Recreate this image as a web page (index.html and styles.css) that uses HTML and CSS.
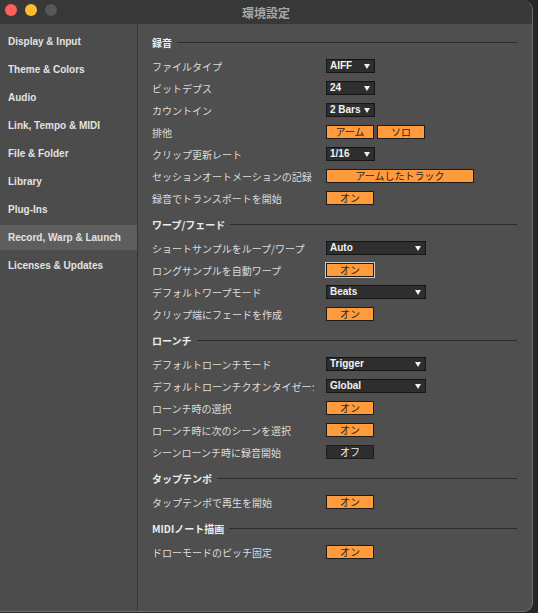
FILE: index.html
```html
<!DOCTYPE html>
<html lang="ja">
<head>
    <meta charset="UTF-8">
    <title>環境設定</title>
    <link rel="stylesheet" href="styles.css">
</head>
<body>

    <div class="window">
        <div class="titlebar">
            <div class="lights">
                <span class="light red"></span>
                <span class="light yellow"></span>
                <span class="light gray"></span>
            </div>
            <div class="title">環境設定</div>
        </div>

        <div class="main">
            <div class="sidebar">
                <div class="nav-item">Display &amp; Input</div>
                <div class="nav-item">Theme &amp; Colors</div>
                <div class="nav-item">Audio</div>
                <div class="nav-item">Link, Tempo &amp; MIDI</div>
                <div class="nav-item">File &amp; Folder</div>
                <div class="nav-item">Library</div>
                <div class="nav-item">Plug-Ins</div>
                <div class="nav-item active">Record, Warp &amp; Launch</div>
                <div class="nav-item">Licenses &amp; Updates</div>
            </div>

            <div class="content">
                <div class="section-title"><span>録音</span></div>
                <div class="row">
                    <div class="label">ファイルタイプ</div>
                    <div class="dropdown">AIFF</div>
                </div>
                <div class="row">
                    <div class="label">ビットデプス</div>
                    <div class="dropdown">24</div>
                </div>
                <div class="row">
                    <div class="label">カウントイン</div>
                    <div class="dropdown">2 Bars</div>
                </div>
                <div class="row">
                    <div class="label">排他</div>
                    <div class="toggle on">アーム</div>
                    <div class="toggle on">ソロ</div>
                </div>
                <div class="row">
                    <div class="label">クリップ更新レート</div>
                    <div class="dropdown">1/16</div>
                </div>
                <div class="row">
                    <div class="label">セッションオートメーションの記録</div>
                    <div class="toggle on xwide">アームしたトラック</div>
                </div>
                <div class="row">
                    <div class="label">録音でトランスポートを開始</div>
                    <div class="toggle on">オン</div>
                </div>

                <div class="section-title"><span>ワープ/フェード</span></div>
                <div class="row">
                    <div class="label">ショートサンプルをループ/ワープ</div>
                    <div class="dropdown wide">Auto</div>
                </div>
                <div class="row">
                    <div class="label">ロングサンプルを自動ワープ</div>
                    <div class="toggle on focus">オン</div>
                </div>
                <div class="row">
                    <div class="label">デフォルトワープモード</div>
                    <div class="dropdown wide">Beats</div>
                </div>
                <div class="row">
                    <div class="label">クリップ端にフェードを作成</div>
                    <div class="toggle on">オン</div>
                </div>

                <div class="section-title"><span>ローンチ</span></div>
                <div class="row">
                    <div class="label">デフォルトローンチモード</div>
                    <div class="dropdown wide">Trigger</div>
                </div>
                <div class="row">
                    <div class="label">デフォルトローンチクオンタイゼーション</div>
                    <div class="dropdown wide">Global</div>
                </div>
                <div class="row">
                    <div class="label">ローンチ時の選択</div>
                    <div class="toggle on">オン</div>
                </div>
                <div class="row">
                    <div class="label">ローンチ時に次のシーンを選択</div>
                    <div class="toggle on">オン</div>
                </div>
                <div class="row">
                    <div class="label">シーンローンチ時に録音開始</div>
                    <div class="toggle">オフ</div>
                </div>

                <div class="section-title"><span>タップテンポ</span></div>
                <div class="row">
                    <div class="label">タップテンポで再生を開始</div>
                    <div class="toggle on">オン</div>
                </div>

                <div class="section-title"><span>MIDIノート描画</span></div>
                <div class="row">
                    <div class="label">ドローモードのピッチ固定</div>
                    <div class="toggle on">オン</div>
                </div>
            </div>
        </div>
    </div>

</body>
</html>
```

FILE: styles.css
```css
body {
    margin: 0;
    background-color: #262626;
    font-family: "Noto Sans CJK JP", "Liberation Sans", sans-serif;
    color: #e4e4e4;
}
.window {
    width: 532px;
    height: 611px;
    background: #4f4f4f;
    border-right: 1px solid #6e6e6e;
    border-bottom: 1px solid #6e6e6e;
    border-radius: 0 10px 9px 0;
    overflow: hidden;
    display: flex;
    flex-direction: column;
}
.titlebar {
    height: 24px;
    background: #383838;
    position: relative;
    display: flex;
    align-items: center;
    justify-content: center;
    flex-shrink: 0;
}
.lights {
    position: absolute;
    left: 5px;
    top: 4px;
    display: flex;
    gap: 8px;
}
.light {
    width: 12px;
    height: 12px;
    border-radius: 50%;
}
.red { background: #fe5f57; }
.yellow { background: #febc2e; }
.gray { background: #575757; }
.title {
    font-size: 12px;
    font-weight: bold;
    color: #a6a6a6;
}
.main {
    flex: 1;
    display: flex;
}
.sidebar {
    width: 137px;
    border-right: 1px solid #353535;
    background: #4c4c4c;
    padding-top: 5px;
    display: flex;
    flex-direction: column;
    gap: 3px;
    font-family: "Liberation Sans", Arial, sans-serif;
}
.nav-item {
    height: 25px;
    line-height: 25px;
    padding-left: 8px;
    font-size: 10px;
    font-weight: bold;
    color: #e2e2e2;
}
.nav-item.active {
    background: #5e5e5e;
}
.content {
    flex: 1;
    padding: 8px 15px 0 14px;
}
.section-title {
    height: 20px;
    display: flex;
    align-items: center;
    margin: 5px 0 3px;
    font-size: 10px;
    font-weight: bold;
    color: #ececec;
}
.section-title:first-child {
    margin-top: 0;
}
.section-title::after {
    content: "";
    flex: 1;
    height: 1px;
    background: #2c2c2c;
    margin-left: 5px;
}
.row {
    height: 22px;
    display: flex;
    align-items: center;
}
.label {
    width: 162px;
    margin-right: 12px;
    white-space: nowrap;
    overflow: hidden;
    font-size: 10px;
    color: #dcdcdc;
}
.dropdown {
    width: 44px;
    height: 12px;
    line-height: 12px;
    background: #2e2e2e;
    border: 1px solid #151515;
    padding-left: 3px;
    box-sizing: content-box;
    font-family: "Liberation Sans", Arial, sans-serif;
    font-size: 10px;
    font-weight: bold;
    color: #f2f2f2;
    position: relative;
}
.dropdown::after {
    content: "";
    position: absolute;
    right: 4px;
    top: 4px;
    border-left: 3.5px solid transparent;
    border-right: 3.5px solid transparent;
    border-top: 5px solid #f0f0f0;
}
.dropdown.wide {
    width: 95px;
}
.toggle {
    width: 46px;
    height: 12px;
    line-height: 12px;
    border: 1px solid #1c1c1c;
    background: #2e2e2e;
    color: #f0f0f0;
    text-align: center;
    font-size: 10px;
    margin-right: 3px;
}
.toggle.on {
    background: #ff9a3d;
    color: #2c2418;
}
.toggle.xwide {
    width: 146px;
}
.toggle.focus {
    outline: 1px solid #c9c9c9;
}
```
